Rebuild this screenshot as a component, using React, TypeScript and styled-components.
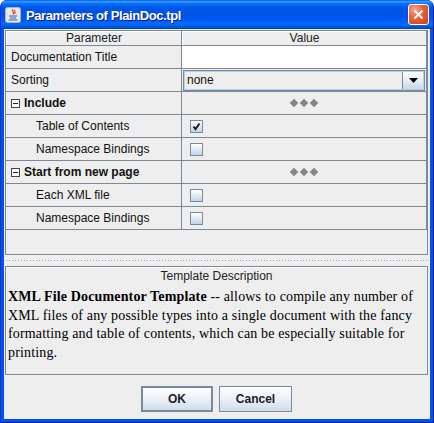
import React from "react";
import styled, { createGlobalStyle } from "styled-components";

const Global = createGlobalStyle`
  html, body { margin: 0; padding: 0; background: #ffffff; }
  body { font-family: "Liberation Sans", Arial, sans-serif; }
  * { box-sizing: border-box; }
`;

const LINE = "#7a8a99";

const Window = styled.div`
  width: 434px;
  height: 423px;
  display: flex;
  flex-direction: column;
  background: #0553e2;
  border-radius: 7px 7px 0 0;
  overflow: hidden;
  border-left: 1px solid #0831d9;
  border-right: 1px solid #001ea0;
  border-bottom: 1px solid #001ea0;
`;

const TitleBar = styled.div`
  height: 29px;
  flex: none;
  display: flex;
  align-items: center;
  padding: 0 4px 0 4px;
  gap: 5px;
  background: linear-gradient(
    to bottom,
    #0058ee 0%,
    #3593ff 5%,
    #288eff 8%,
    #127dff 11%,
    #036ffc 14%,
    #0262ee 20%,
    #0057e5 28%,
    #0054e3 36%,
    #0055eb 60%,
    #005bf5 70%,
    #026afe 80%,
    #0062ef 88%,
    #0052d6 94%,
    #0040ab 100%
  );
`;

const Title = styled.span`
  flex: 1;
  color: #ffffff;
  font: bold 13px "Liberation Sans", Arial, sans-serif;
  letter-spacing: -0.4px;
  text-shadow: 1px 1px 0 #0a1a88;
  padding-top: 1px;
`;

const CloseBtn = styled.div`
  width: 21px;
  height: 21px;
  border: 1px solid #ffffff;
  border-radius: 3px;
  background: radial-gradient(circle at 30% 25%, #f4a48a 0%, #e8663f 40%, #d23a12 100%);
  display: flex;
  align-items: center;
  justify-content: center;
`;

const Body = styled.div`
  flex: 1;
  margin: 0 3px 3px 3px;
  background: #eeeeee;
  display: flex;
  flex-direction: column;
  padding: 1px 2px 0 1px;
`;

const TablePane = styled.div`
  height: 225px;
  flex: none;
  border: 1px solid ${LINE};
  display: flex;
  flex-direction: column;
  background: #eeeeee;
`;

const Grid = styled.div`
  display: grid;
  grid-template-columns: 175px 244px;
  grid-template-rows: 14px repeat(8, 22px);
  row-gap: 1px;
  column-gap: 1px;
  background: ${LINE};
  border-bottom: 1px solid ${LINE};
  border-right: 1px solid ${LINE};
  width: 421px;
`;

const HeaderCell = styled.div`
  background: #eeeeee;
  border-top: 1px solid #ffffff;
  border-left: 1px solid #ffffff;
  font-size: 12px;
  line-height: 13px;
  color: #222222;
  text-align: center;
`;

const Cell = styled.div<{ $indent?: number; $white?: boolean; $bold?: boolean }>`
  background: ${(p) => (p.$white ? "#ffffff" : "#eeeeee")};
  display: flex;
  align-items: center;
  padding-left: ${(p) => p.$indent ?? 5}px;
  font-size: 12px;
  font-weight: ${(p) => (p.$bold ? "bold" : "normal")};
  color: #111111;
  white-space: nowrap;
  gap: 3px;
`;

const CenterCell = styled(Cell)`
  justify-content: center;
  padding-left: 0;
  gap: 4px;
`;

const Filler = styled.div`
  flex: 1;
`;

const Diamond = styled.span`
  width: 6px;
  height: 6px;
  background: #858585;
  transform: rotate(45deg);
  display: inline-block;
`;

const ToggleBox = styled.span`
  width: 9px;
  height: 9px;
  border: 1px solid #444444;
  background: #ffffff;
  position: relative;
  display: inline-block;
  margin-right: 1px;
  &::after {
    content: "";
    position: absolute;
    left: 1px;
    right: 1px;
    top: 3px;
    height: 1px;
    background: #222222;
  }
`;

const CheckBox = styled.span`
  width: 13px;
  height: 13px;
  border: 1px solid ${LINE};
  background: linear-gradient(to bottom, #ffffff 0%, #e9eef6 40%, #c4d3e6 100%);
  display: flex;
  align-items: center;
  justify-content: center;
`;

const CheckCell = styled(Cell)`
  padding-left: 8px;
`;

const Combo = styled.div`
  margin: 0 1px 0 1px;
  height: 21px;
  flex: 1;
  border: 1px solid ${LINE};
  display: flex;
  background: #eeeeee;
  box-shadow: inset 0 0 0 1px #b8cfe5;
`;

const ComboText = styled.div`
  flex: 1;
  padding-left: 3px;
  font-size: 12px;
  line-height: 19px;
  color: #111111;
`;

const ComboArrow = styled.div`
  width: 21px;
  border-left: 1px solid ${LINE};
  margin: 1px 1px 1px 0;
  background: linear-gradient(to bottom, #ffffff 0%, #e7edf5 50%, #c8d6e8 100%);
  display: flex;
  align-items: center;
  justify-content: center;
`;

const ComboCell = styled(Cell)`
  padding-left: 0;
  background: #eeeeee;
`;

const Splitter = styled.div`
  height: 11px;
  flex: none;
  display: flex;
  align-items: center;
  &::after {
    content: "";
    flex: 1;
    height: 1px;
    background-image: radial-gradient(circle, #9aa6b8 0.6px, transparent 0.9px);
    background-size: 3px 1px;
  }
`;

const DescPanel = styled.div`
  height: 109px;
  flex: none;
  border: 1px solid ${LINE};
  display: flex;
  flex-direction: column;
`;

const DescHeader = styled.div`
  height: 18px;
  border-top: 1px solid #ffffff;
  font-size: 12px;
  line-height: 16px;
  text-align: center;
  color: #222222;
`;

const DescText = styled.div`
  padding: 3px 2px 0 2px;
  font-family: "Liberation Serif", "Times New Roman", serif;
  font-size: 14px;
  letter-spacing: 0.15px;
  line-height: 18.7px;
  color: #000000;
  white-space: nowrap;
`;

const ButtonRow = styled.div`
  flex: 1;
  display: flex;
  justify-content: center;
  align-items: flex-start;
  padding-top: 11px;
  gap: 6px;
`;

const Button = styled.button<{ $default?: boolean }>`
  height: 26px;
  width: ${(p) => (p.$default ? 72 : 73)}px;
  border: ${(p) => (p.$default ? `2px solid ${LINE}` : `1px solid ${LINE}`)};
  padding: 0;
  background: linear-gradient(to bottom, #ffffff 0%, #eef2f8 45%, #d0dcec 100%);
  font: bold 12px "Liberation Sans", Arial, sans-serif;
  color: #222222;
`;

const Check = () => (
  <svg width="9" height="9" viewBox="0 0 9 9">
    <path d="M1.5 4.5 L3.5 7 L7.5 1.5" stroke="#1a1a2a" strokeWidth="2" fill="none" />
  </svg>
);

const JavaIcon = () => (
  <svg width="16" height="16" viewBox="0 0 16 16">
    <rect x="0.5" y="0.5" width="15" height="15" rx="2" fill="#e8e8e8" stroke="#b0b0b0" />
    <path d="M8 2 C6 4 10 5 8 7.5 M10 3 C9 4.5 11 5 9.5 7" stroke="#e04020" strokeWidth="1.2" fill="none" />
    <path d="M4 9 H12 M5 11 H11 M3.5 13 H12.5" stroke="#3a5ea8" strokeWidth="1.2" />
  </svg>
);

const Parameters: React.FC = () => (
  <TablePane>
    <Grid>
      <HeaderCell>Parameter</HeaderCell>
      <HeaderCell>Value</HeaderCell>

      <Cell>Documentation Title</Cell>
      <Cell $white />

      <Cell>Sorting</Cell>
      <ComboCell>
        <Combo>
          <ComboText>none</ComboText>
          <ComboArrow>
            <svg width="9" height="5" viewBox="0 0 9 5">
              <path d="M0 0 H9 L4.5 5 Z" fill="#000000" />
            </svg>
          </ComboArrow>
        </Combo>
      </ComboCell>

      <Cell $bold>
        <ToggleBox />
        Include
      </Cell>
      <CenterCell>
        <Diamond />
        <Diamond />
        <Diamond />
      </CenterCell>

      <Cell $indent={30}>Table of Contents</Cell>
      <CheckCell>
        <CheckBox>
          <Check />
        </CheckBox>
      </CheckCell>

      <Cell $indent={30}>Namespace Bindings</Cell>
      <CheckCell>
        <CheckBox />
      </CheckCell>

      <Cell $bold>
        <ToggleBox />
        Start from new page
      </Cell>
      <CenterCell>
        <Diamond />
        <Diamond />
        <Diamond />
      </CenterCell>

      <Cell $indent={30}>Each XML file</Cell>
      <CheckCell>
        <CheckBox />
      </CheckCell>

      <Cell $indent={30}>Namespace Bindings</Cell>
      <CheckCell>
        <CheckBox />
      </CheckCell>
    </Grid>
    <Filler />
  </TablePane>
);

export default function App() {
  return (
    <>
      <Global />
      <Window>
        <TitleBar>
          <JavaIcon />
          <Title>Parameters of PlainDoc.tpl</Title>
          <CloseBtn>
            <svg width="11" height="11" viewBox="0 0 11 11">
              <path d="M1.5 1.5 L9.5 9.5 M9.5 1.5 L1.5 9.5" stroke="#ffffff" strokeWidth="2" />
            </svg>
          </CloseBtn>
        </TitleBar>
        <Body>
          <Parameters />
          <Splitter />
          <DescPanel>
            <DescHeader>Template Description</DescHeader>
            <DescText>
              <b>XML File Documentor Template</b> -- allows to compile any number of
              <br />
              XML files of any possible types into a single document with the fancy
              <br />
              formatting and table of contents, which can be especially suitable for
              <br />
              printing.
            </DescText>
          </DescPanel>
          <ButtonRow>
            <Button $default>OK</Button>
            <Button>Cancel</Button>
          </ButtonRow>
        </Body>
      </Window>
    </>
  );
}
